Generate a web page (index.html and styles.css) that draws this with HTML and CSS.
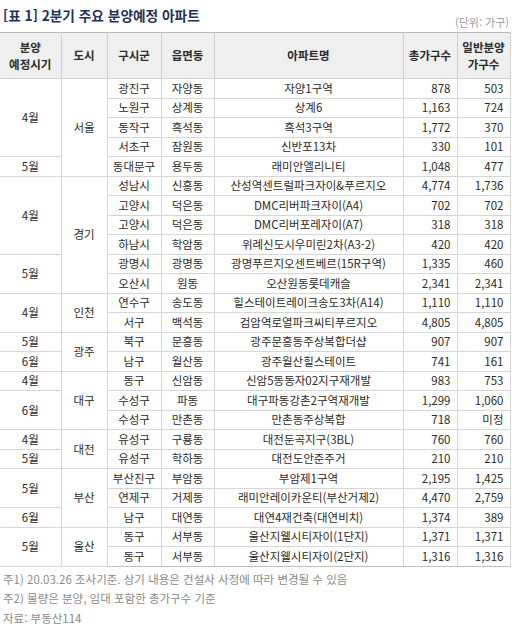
FILE: index.html
```html
<!DOCTYPE html>
<html lang="ko">
<head>
<meta charset="utf-8">
<link rel="stylesheet" href="styles.css">
</head>
<body>
<div class="page">
  <div class="head">
    <h1 class="title">[표 1] 2분기 주요 분양예정 아파트</h1>
    <div class="unit">(단위: 가구)</div>
  </div>
  <table class="tbl">
    <colgroup>
      <col class="c1"><col class="c2"><col class="c3"><col class="c4"><col class="c5"><col class="c6"><col class="c7">
    </colgroup>
    <thead>
      <tr>
        <th>분양<br>예정시기</th><th>도시</th><th>구시군</th><th>읍면동</th><th>아파트명</th><th>총가구수</th><th>일반분양<br>가구수</th>
      </tr>
    </thead>
    <tbody>
      <tr><td rowspan="4">4월</td><td rowspan="5">서울</td><td>광진구</td><td>자양동</td><td>자양1구역</td><td class="n">878</td><td class="n">503</td></tr>
      <tr><td>노원구</td><td>상계동</td><td>상계6</td><td class="n">1,163</td><td class="n">724</td></tr>
      <tr><td>동작구</td><td>흑석동</td><td>흑석3구역</td><td class="n">1,772</td><td class="n">370</td></tr>
      <tr><td>서초구</td><td>잠원동</td><td>신반포13차</td><td class="n">330</td><td class="n">101</td></tr>
      <tr><td>5월</td><td>동대문구</td><td>용두동</td><td>래미안엘리니티</td><td class="n">1,048</td><td class="n">477</td></tr>
      <tr><td rowspan="4">4월</td><td rowspan="6">경기</td><td>성남시</td><td>신흥동</td><td>산성역센트럴파크자이&amp;푸르지오</td><td class="n">4,774</td><td class="n">1,736</td></tr>
      <tr><td>고양시</td><td>덕은동</td><td>DMC리버파크자이(A4)</td><td class="n">702</td><td class="n">702</td></tr>
      <tr><td>고양시</td><td>덕은동</td><td>DMC리버포레자이(A7)</td><td class="n">318</td><td class="n">318</td></tr>
      <tr><td>하남시</td><td>학암동</td><td>위례신도시우미린2차(A3-2)</td><td class="n">420</td><td class="n">420</td></tr>
      <tr><td rowspan="2">5월</td><td>광명시</td><td>광명동</td><td>광명푸르지오센트베르(15R구역)</td><td class="n">1,335</td><td class="n">460</td></tr>
      <tr><td>오산시</td><td>원동</td><td>오산원동롯데캐슬</td><td class="n">2,341</td><td class="n">2,341</td></tr>
      <tr><td rowspan="2">4월</td><td rowspan="2">인천</td><td>연수구</td><td>송도동</td><td>힐스테이트레이크송도3차(A14)</td><td class="n">1,110</td><td class="n">1,110</td></tr>
      <tr><td>서구</td><td>백석동</td><td>검암역로열파크씨티푸르지오</td><td class="n">4,805</td><td class="n">4,805</td></tr>
      <tr><td>5월</td><td rowspan="2">광주</td><td>북구</td><td>문흥동</td><td>광주문흥동주상복합더샵</td><td class="n">907</td><td class="n">907</td></tr>
      <tr><td>6월</td><td>남구</td><td>월산동</td><td>광주월산힐스테이트</td><td class="n">741</td><td class="n">161</td></tr>
      <tr><td>4월</td><td rowspan="3">대구</td><td>동구</td><td>신암동</td><td>신암5동동자02지구재개발</td><td class="n">983</td><td class="n">753</td></tr>
      <tr><td rowspan="2">6월</td><td>수성구</td><td>파동</td><td>대구파동강촌2구역재개발</td><td class="n">1,299</td><td class="n">1,060</td></tr>
      <tr><td>수성구</td><td>만촌동</td><td>만촌동주상복합</td><td class="n">718</td><td class="n">미정</td></tr>
      <tr><td>4월</td><td rowspan="2">대전</td><td>유성구</td><td>구룡동</td><td>대전둔곡지구(3BL)</td><td class="n">760</td><td class="n">760</td></tr>
      <tr><td>5월</td><td>유성구</td><td>학하동</td><td>대전도안준주거</td><td class="n">210</td><td class="n">210</td></tr>
      <tr><td rowspan="2">5월</td><td rowspan="3">부산</td><td>부산진구</td><td>부암동</td><td>부암제1구역</td><td class="n">2,195</td><td class="n">1,425</td></tr>
      <tr><td>연제구</td><td>거제동</td><td>래미안레이카운티(부산거제2)</td><td class="n">4,470</td><td class="n">2,759</td></tr>
      <tr><td>6월</td><td>남구</td><td>대연동</td><td>대연4재건축(대연비치)</td><td class="n">1,374</td><td class="n">389</td></tr>
      <tr><td rowspan="2">5월</td><td rowspan="2">울산</td><td>동구</td><td>서부동</td><td>울산지웰시티자이(1단지)</td><td class="n">1,371</td><td class="n">1,371</td></tr>
      <tr><td>동구</td><td>서부동</td><td>울산지웰시티자이(2단지)</td><td class="n">1,316</td><td class="n">1,316</td></tr>
    </tbody>
  </table>
  <div class="notes">
    <p>주1) 20.03.26 조사기준. 상기 내용은 건설사 사정에 따라 변경될 수 있음</p>
    <p>주2) 물량은 분양, 임대 포함한 총가구수 기준</p>
    <p>자료: 부동산114</p>
  </div>
</div>
</body>
</html>
```

FILE: styles.css
```css
html, body {
  margin: 0;
  padding: 0;
  background: #ffffff;
}
body {
  font-family: "Noto Sans CJK KR", "Noto Sans", sans-serif;
  color: #2b2b2b;
}
.page {
  width: 512px;
}
.head {
  position: relative;
  height: 32px;
}
.title {
  margin: 0;
  padding: 6px 0 0 3px;
  font-size: 13.7px;
  line-height: 18px;
  font-weight: 700;
  color: #26315a;
}
.unit {
  position: absolute;
  right: 3px;
  top: 15px;
  font-size: 11px;
  line-height: 14px;
  color: #9a9a9a;
}
.tbl {
  width: 510px;
  border-collapse: collapse;
  border-left: hidden;
  table-layout: fixed;
  font-size: 11.5px;
}
.c1 { width: 61px; }
.c2 { width: 46px; }
.c3 { width: 54px; }
.c4 { width: 53px; }
.c5 { width: 189px; }
.c6 { width: 54px; }
.c7 { width: 53px; }
.tbl th {
  background: #efefef;
  height: 45px;
  padding: 0;
  font-weight: 700;
  line-height: 17px;
  color: #2b2b2b;
  border: 1px solid #cfcfcf;
  border-top: 1px solid #b8b8b8;
}
.tbl td {
  height: 18.5px;
  padding: 0;
  text-align: center;
  line-height: 15px;
  border: 1px solid #d6d6d6;
  color: #2b2b2b;
  white-space: nowrap;
}
.tbl td.n {
  text-align: right;
  padding-right: 6px;
}
.tbl tbody tr:last-child td {
  border-bottom: 1px solid #c0c0c0;
}
.notes {
  padding: 3px 0 0 3px;
}
.notes p {
  margin: 0;
  font-size: 11.5px;
  line-height: 19.5px;
  color: #8a8a8a;
}
```
